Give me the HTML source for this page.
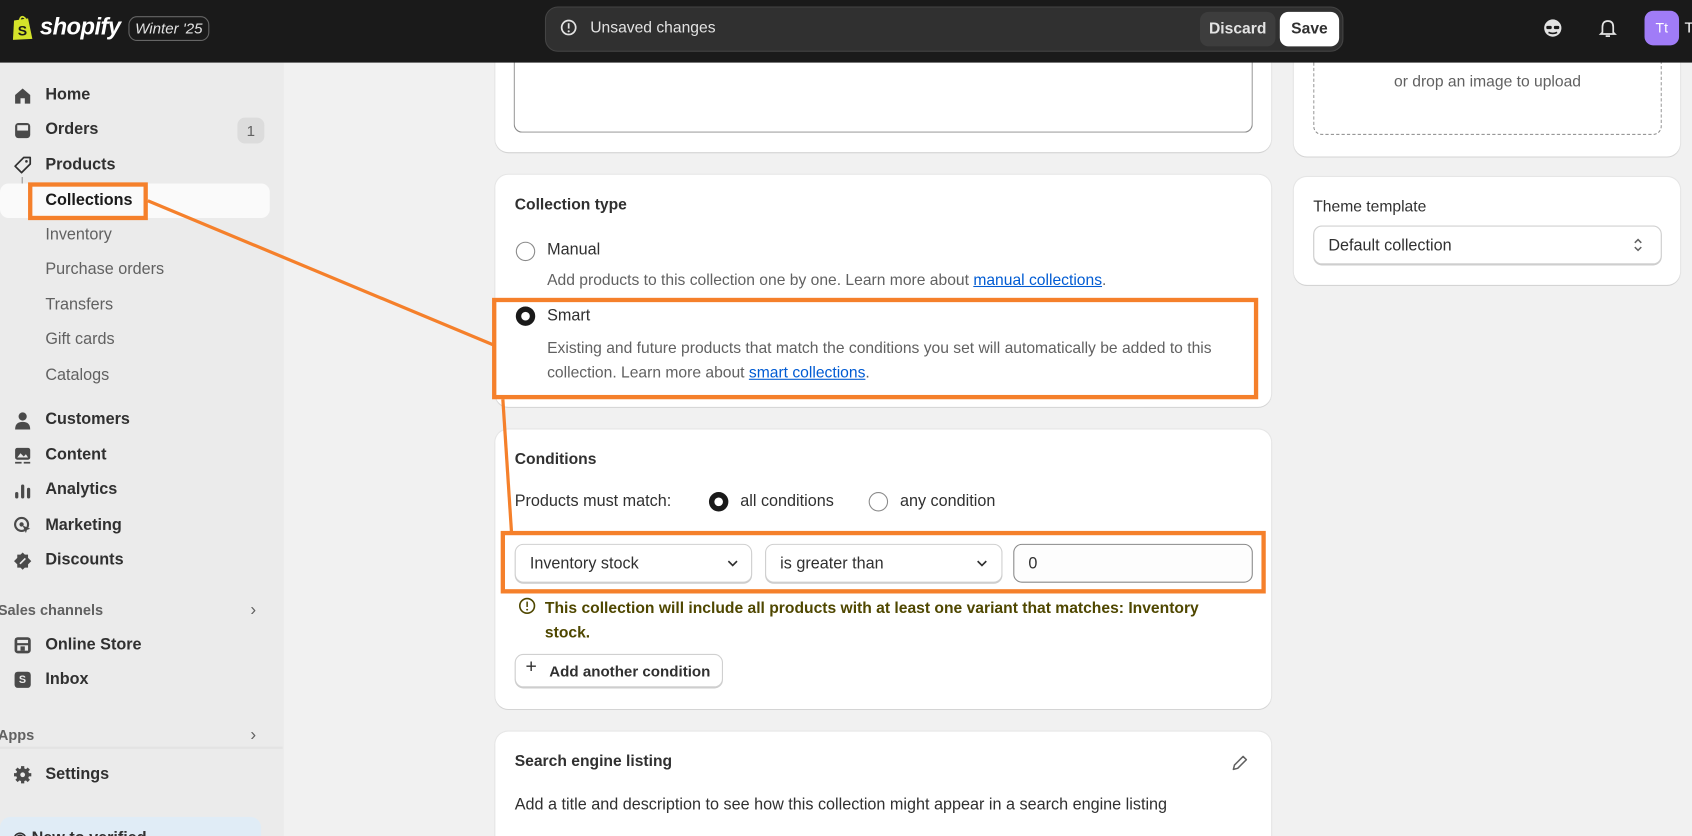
<!DOCTYPE html>
<html><head><meta charset="utf-8"><style>
*{box-sizing:border-box;margin:0;padding:0}
html,body{width:1692px;height:836px;overflow:hidden;background:#f1f1f1;font-family:"Liberation Sans",Arial,sans-serif;color:#303030}
#w{position:absolute;left:0;top:0;width:1568px;height:775px;transform:scale(1.07908);transform-origin:0 0;background:#f1f1f1;overflow:hidden}
.a{position:absolute}
.top{left:0;top:0;width:1568px;height:58px;background:#1a1a1a;z-index:5}
.z{z-index:6}
.side{left:0;top:58px;width:263px;height:717px;background:#ebebeb}
.nav{position:absolute;left:42px;font-size:15px;font-weight:bold;color:#303030}
.sub{position:absolute;left:42px;font-size:15px;color:#616161}
.ic{position:absolute;left:12px;width:18px;height:18px}
.card{position:absolute;background:#fff;border-radius:12px;box-shadow:0 1px 0 #d4d4d4,0 0 0 1px #e6e6e6}
.t{position:absolute;font-size:14.5px;color:#303030}
.b{font-weight:bold}
.g{color:#616161}
a{color:#005bd3;text-decoration:underline}
.radio{position:absolute;width:18px;height:18px;border-radius:50%;border:1px solid #8a8a8a;background:#fff}
.radio.on{border:5px solid #1a1a1a}
.sel{position:absolute;height:36px;border:1px solid #d0d0d0;border-radius:8px;background:#fff;box-shadow:0 1px 0 #ccc;font-size:15px;padding:9px 13px;color:#303030}
.ob{position:absolute;border:4px solid #f5802b;z-index:4}
</style></head><body><div id="w">
<div class="a top"></div>
<svg class="a z" style="left:10px;top:13px" width="22" height="25" viewBox="0 0 22 25"><path d="M3 6 L16 4 L20 23 L2 24 Z" fill="#d4e32a"/><path d="M8 7 Q9 1 12 3 Q14 4 14 7" fill="none" stroke="#d4e32a" stroke-width="1.6"/><text x="6.5" y="20" font-size="13" font-weight="bold" fill="#1a1a1a" font-family="Liberation Sans">S</text></svg>
<div class="a z" style="left:37px;top:12px;font-size:22px;font-weight:bold;font-style:italic;color:#fff;letter-spacing:-0.5px">shopify</div>
<div class="a z" style="left:119px;top:15px;width:75px;height:23px;border:1px solid #666;border-radius:8px;color:#e3e3e3;font-size:14px;font-style:italic;text-align:center;line-height:21px">Winter '25</div>
<div class="a z" style="left:505px;top:6px;width:740px;height:42px;background:#303030;border-radius:12px;border:1px solid #444"></div>
<svg class="a z" style="left:518px;top:17px" width="18" height="18" viewBox="0 0 18 18"><circle cx="9" cy="8.5" r="6.5" fill="none" stroke="#e3e3e3" stroke-width="1.6"/><rect x="8.2" y="4.5" width="1.6" height="5" fill="#e3e3e3"/><circle cx="9" cy="12" r="1" fill="#e3e3e3"/></svg>
<div class="a z" style="left:547px;top:18px;color:#e3e3e3;font-size:14.5px">Unsaved changes</div>
<div class="a z" style="left:1112px;top:11px;width:70px;height:32px;background:#3d3d3d;border-radius:8px;color:#e3e3e3;font-size:14.5px;font-weight:bold;text-align:center;line-height:32px">Discard</div>
<div class="a z" style="left:1186px;top:11px;width:55px;height:32px;background:#fff;border-radius:8px;color:#303030;font-size:14.5px;font-weight:bold;text-align:center;line-height:32px">Save</div>
<svg class="a z" style="left:1429px;top:16px" width="20" height="20" viewBox="0 0 20 20"><circle cx="10" cy="10" r="8" fill="#e3e3e3"/><rect x="4" y="8" width="5" height="3" rx="1" fill="#1a1a1a"/><rect x="11" y="8" width="5" height="3" rx="1" fill="#1a1a1a"/><path d="M6 14 Q10 16 14 14" stroke="#1a1a1a" stroke-width="1.5" fill="none"/></svg>
<svg class="a z" style="left:1480px;top:16px" width="20" height="20" viewBox="0 0 20 20"><path d="M5 14 L5 9 Q5 3.5 10 3.5 Q15 3.5 15 9 L15 14 L16.5 15.5 L3.5 15.5 Z" fill="none" stroke="#e3e3e3" stroke-width="1.6"/><path d="M8 17.5 L12 17.5" stroke="#e3e3e3" stroke-width="1.6"/></svg>
<div class="a z" style="left:1524px;top:10px;width:32px;height:32px;background:#a07cf7;border-radius:8px;color:#fff;font-size:13px;text-align:center;line-height:32px">Tt</div>
<div class="a z" style="left:1561px;top:17px;color:#fff;font-size:14px">T</div>

<div class="a side"></div>
<svg class="ic" style="top:80px" viewBox="0 0 18 18"><path d="M2 8 L9 2 L16 8 L16 16 L11 16 L11 11 L7 11 L7 16 L2 16Z" fill="#4a4a4a"/></svg>
<div class="nav" style="top:79px">Home</div>
<svg class="ic" style="top:112px" viewBox="0 0 18 18"><rect x="2" y="2" width="14" height="14" rx="3" fill="#4a4a4a"/><rect x="4" y="4" width="10" height="5" fill="#ebebeb"/></svg>
<div class="nav" style="top:111px">Orders</div>
<div class="a" style="left:220px;top:109px;width:25px;height:24px;border-radius:7px;background:#dcdcdc;color:#616161;font-size:14px;text-align:center;line-height:24px">1</div>
<svg class="ic" style="top:144px" viewBox="0 0 18 18"><path d="M10 2 L16 2 L16 8 L8 16 L2 10 Z" fill="none" stroke="#303030" stroke-width="1.6" stroke-linejoin="round"/><circle cx="12.5" cy="5.5" r="1.2" fill="#303030"/></svg>
<div class="nav" style="top:144px">Products</div>
<div class="a" style="left:20px;top:164px;width:10px;height:22px;border-left:1.5px solid #8a8a8a;border-bottom:1.5px solid #8a8a8a;border-bottom-left-radius:5px"></div>
<div class="a" style="left:0;top:170px;width:250px;height:32px;background:#fafafa;border-radius:8px"></div>
<div class="nav" style="top:177px;color:#1a1a1a">Collections</div>
<div class="sub" style="top:209px">Inventory</div>
<div class="sub" style="top:241px">Purchase orders</div>
<div class="sub" style="top:274px">Transfers</div>
<div class="sub" style="top:306px">Gift cards</div>
<div class="sub" style="top:339px">Catalogs</div>
<svg class="ic" style="top:381px" viewBox="0 0 18 18"><circle cx="9" cy="5" r="3.8" fill="#4a4a4a"/><path d="M2 17 Q2 10 9 10 Q16 10 16 17Z" fill="#4a4a4a"/></svg>
<div class="nav" style="top:380px">Customers</div>
<svg class="ic" style="top:413px" viewBox="0 0 18 18"><rect x="2" y="2" width="14" height="11" rx="2" fill="#4a4a4a"/><path d="M4 11 L7 7 L10 10 L12 8 L14 11Z" fill="#ebebeb"/><rect x="2" y="15" width="6" height="1.6" fill="#4a4a4a"/><rect x="10" y="15" width="6" height="1.6" fill="#4a4a4a"/></svg>
<div class="nav" style="top:413px">Content</div>
<svg class="ic" style="top:446px" viewBox="0 0 18 18"><rect x="2" y="10" width="3" height="6" rx="1.5" fill="#4a4a4a"/><rect x="7.5" y="3" width="3" height="13" rx="1.5" fill="#4a4a4a"/><rect x="13" y="6" width="3" height="10" rx="1.5" fill="#4a4a4a"/></svg>
<div class="nav" style="top:445px">Analytics</div>
<svg class="ic" style="top:478px" viewBox="0 0 18 18"><circle cx="8" cy="8" r="6" fill="none" stroke="#4a4a4a" stroke-width="2"/><circle cx="8" cy="8" r="2" fill="#4a4a4a"/><path d="M9 9 L16 12 L13 13 L12 16Z" fill="#4a4a4a"/></svg>
<div class="nav" style="top:478px">Marketing</div>
<svg class="ic" style="top:511px" viewBox="0 0 18 18"><path d="M9 1 L11 3 L14 3 L14 6 L17 9 L14 12 L14 15 L11 15 L9 17 L7 15 L4 15 L4 12 L1 9 L4 6 L4 3 L7 3Z" fill="#4a4a4a"/><path d="M6.5 11.5 L11.5 6.5" stroke="#ebebeb" stroke-width="1.5"/></svg>
<div class="nav" style="top:510px">Discounts</div>
<div class="a" style="left:-2px;top:558px;font-size:13.5px;font-weight:bold;color:#616161">Sales channels</div>
<div class="a" style="left:232px;top:557px;font-size:16px;color:#616161">›</div>
<svg class="ic" style="top:589px" viewBox="0 0 18 18"><rect x="1.5" y="1.5" width="15" height="15" rx="3" fill="#4a4a4a"/><rect x="4" y="4" width="10" height="3" fill="#ebebeb"/><rect x="4" y="9" width="10" height="5" fill="#ebebeb"/><rect x="7" y="10" width="4" height="4" fill="#4a4a4a"/></svg>
<div class="nav" style="top:589px">Online Store</div>
<svg class="ic" style="top:621px" viewBox="0 0 18 18"><rect x="1.5" y="1.5" width="15" height="15" rx="3" fill="#4a4a4a"/><text x="5.5" y="12" font-size="10" font-weight="bold" fill="#ebebeb" font-family="Liberation Sans">S</text></svg>
<div class="nav" style="top:621px">Inbox</div>
<div class="a" style="left:-2px;top:674px;font-size:13.5px;font-weight:bold;color:#616161">Apps</div>
<div class="a" style="left:232px;top:673px;font-size:16px;color:#616161">›</div>
<div class="a" style="left:0;top:692px;width:262px;height:2px;background:#e3e3e3"></div>
<svg class="ic" style="top:709px" viewBox="0 0 18 18"><circle cx="9" cy="9" r="6" fill="#4a4a4a"/><g stroke="#4a4a4a" stroke-width="3"><path d="M9 1 V17 M1 9 H17 M3.3 3.3 L14.7 14.7 M14.7 3.3 L3.3 14.7"/></g><circle cx="9" cy="9" r="2.2" fill="#ebebeb"/></svg>
<div class="nav" style="top:709px">Settings</div>
<div class="a" style="left:0;top:757px;width:242px;height:30px;background:#e0ecf6;border-radius:10px"></div>
<div class="a" style="left:12px;top:767px;font-size:15px;font-weight:bold;color:#303030">◉ New to verified</div>

<div class="card" style="left:459px;top:40px;width:719px;height:101px"></div>
<div class="a" style="left:476px;top:50px;width:685px;height:73px;border:1px solid #8a8a8a;border-top:none;border-radius:0 0 8px 8px;background:#fff"></div>
<div class="card" style="left:1199px;top:40px;width:358px;height:105px"></div>
<div class="a" style="left:1217px;top:50px;width:323px;height:75px;border:1px dashed #8a8a8a;border-top:none;border-radius:0 0 8px 8px"></div>
<div class="t g" style="left:1217px;width:323px;text-align:center;top:68px">or drop an image to upload</div>

<div class="card" style="left:459px;top:162px;width:719px;height:215px"></div>
<div class="t b" style="left:477px;top:182px">Collection type</div>
<div class="radio" style="left:478px;top:224px"></div>
<div class="t" style="left:507px;top:223px;font-size:15px">Manual</div>
<div class="t g" style="left:507px;top:252px">Add products to this collection one by one. Learn more about <a>manual collections</a>.</div>
<div class="radio on" style="left:478px;top:284px"></div>
<div class="t" style="left:507px;top:284px;font-size:15px">Smart</div>
<div class="t g" style="left:507px;top:312px;width:650px;line-height:23px">Existing and future products that match the conditions you set will automatically be added to this collection. Learn more about <a>smart collections</a>.</div>

<div class="card" style="left:1199px;top:164px;width:358px;height:100px"></div>
<div class="t" style="left:1217px;top:184px;font-size:14.5px">Theme template</div>
<div class="sel" style="left:1217px;top:209px;width:323px">Default collection</div>
<svg class="a" style="left:1512px;top:219px" width="12" height="16" viewBox="0 0 12 16"><path d="M3 6 L6 3 L9 6 M3 10 L6 13 L9 10" fill="none" stroke="#616161" stroke-width="1.4"/></svg>

<div class="card" style="left:459px;top:398px;width:719px;height:259px"></div>
<div class="t b" style="left:477px;top:418px">Conditions</div>
<div class="t" style="left:477px;top:456px;font-size:15px">Products must match:</div>
<div class="radio on" style="left:657px;top:456px"></div>
<div class="t" style="left:686px;top:456px;font-size:15px">all conditions</div>
<div class="radio" style="left:805px;top:456px"></div>
<div class="t" style="left:834px;top:456px;font-size:15px">any condition</div>
<div class="sel" style="left:477px;top:504px;width:220px">Inventory stock</div>
<div class="sel" style="left:709px;top:504px;width:220px">is greater than</div>
<svg class="a" style="left:673px;top:516px" width="12" height="12" viewBox="0 0 12 12"><path d="M2 4 L6 8 L10 4" fill="none" stroke="#303030" stroke-width="1.5"/></svg>
<svg class="a" style="left:904px;top:516px" width="12" height="12" viewBox="0 0 12 12"><path d="M2 4 L6 8 L10 4" fill="none" stroke="#303030" stroke-width="1.5"/></svg>
<div class="sel" style="left:939px;top:504px;width:222px;border-color:#8a8a8a;box-shadow:none;background:#fdfdfd">0</div>
<svg class="a" style="left:480px;top:553px" width="17" height="17" viewBox="0 0 17 17"><circle cx="8.5" cy="8.5" r="6.8" fill="none" stroke="#4f4700" stroke-width="1.5"/><rect x="7.8" y="4.5" width="1.4" height="5" fill="#4f4700"/><circle cx="8.5" cy="12" r="0.9" fill="#4f4700"/></svg>
<div class="t b" style="left:505px;top:553px;width:650px;color:#4f4700;line-height:23px;font-size:14.5px">This collection will include all products with at least one variant that matches: Inventory stock.</div>
<div class="a" style="left:477px;top:606px;width:193px;height:31px;border:1px solid #d0d0d0;border-radius:8px;background:#fff;box-shadow:0 1px 0 #ccc;font-size:14px;font-weight:bold;padding:7px 0 0 31px">Add another condition</div>
<div class="a" style="left:487px;top:607px;font-size:18px;color:#303030">+</div>

<div class="card" style="left:459px;top:678px;width:719px;height:110px"></div>
<div class="t b" style="left:477px;top:698px">Search engine listing</div>
<svg class="a" style="left:1140px;top:698px" width="18" height="18" viewBox="0 0 18 18"><path d="M3 15 L4 11 L12 3 L15 6 L7 14 Z" fill="none" stroke="#616161" stroke-width="1.4" stroke-linejoin="round"/></svg>
<div class="t" style="left:477px;top:737px;font-size:15px">Add a title and description to see how this collection might appear in a search engine listing</div>

<div class="ob" style="left:26px;top:169px;width:111px;height:35px"></div>
<div class="ob" style="left:456px;top:276px;width:710px;height:94px"></div>
<div class="ob" style="left:464px;top:492px;width:709px;height:58px"></div>
<svg class="a" style="left:0;top:0;z-index:4" width="1568" height="775"><path d="M137 186 L458 320" stroke="#f5802b" stroke-width="3"/><path d="M466 370 L474 493" stroke="#f5802b" stroke-width="3"/></svg>
</div></body></html>
